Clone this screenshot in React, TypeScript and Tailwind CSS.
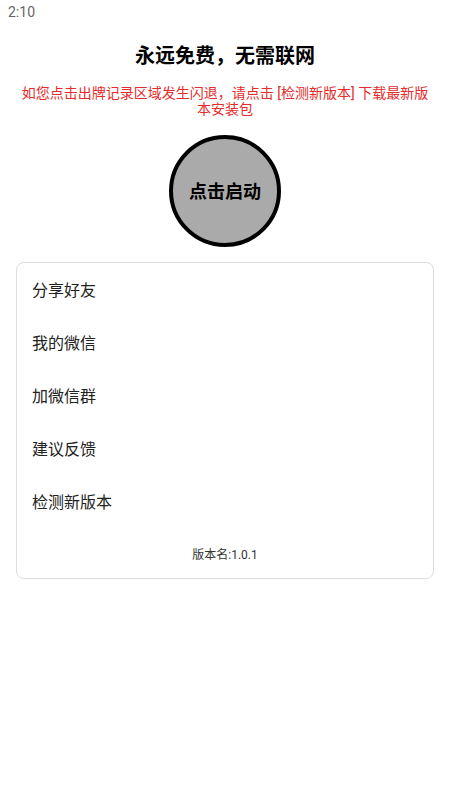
import React from "react";

const font = { fontFamily: 'Roboto, "Noto Sans CJK SC", sans-serif' };

export default function App() {
  const items = ["分享好友", "我的微信", "加微信群", "建议反馈", "检测新版本"];
  return (
    <div className="w-[450px] h-[800px] bg-white flex flex-col" style={font}>
      <div className="h-[24px] pl-[8px] flex items-center text-[14px] text-[#666666]">2:10</div>
      <div className="mt-[20px] h-[24px] flex items-center justify-center text-[20px] font-bold text-black leading-[24px]">
        永远免费，无需联网
      </div>
      <div className="mt-[17px] px-[20px] text-center text-[14px] leading-[16px] text-[#e52b2b]">
        如您点击出牌记录区域发生闪退，请点击 [检测新版本] 下载最新版本安装包
      </div>
      <div className="mt-[18px] flex justify-center">
        <div className="w-[112px] h-[112px] rounded-full border-[4px] border-black bg-[#aaaaaa] flex items-center justify-center text-[18px] font-bold text-black">
          点击启动
        </div>
      </div>
      <div className="mt-[15px] mx-[16px] border border-[#dddddd] rounded-[8px] pt-[1px] pb-[15px]">
        {items.map((t) => (
          <div key={t} className="h-[53px] flex items-center pl-[15px] text-[16px] text-[#222222]">
            {t}
          </div>
        ))}
        <div className="mt-[18px] h-[16px] flex items-center justify-center text-[12px] text-[#333333]">
          版本名:1.0.1
        </div>
      </div>
    </div>
  );
}
